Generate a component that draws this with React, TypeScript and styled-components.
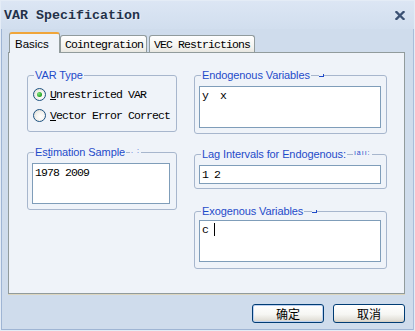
import React from 'react';
import styled, { createGlobalStyle } from 'styled-components';

const Global = createGlobalStyle`
  html, body { margin: 0; padding: 0; }
  body { width: 415px; height: 331px; overflow: hidden; background: #cfdcec; }
`;

const MONO = `"Liberation Mono", "DejaVu Sans Mono", monospace`;
const SANS = `"Liberation Sans", Arial, sans-serif`;

const Window = styled.div`
  box-sizing: border-box;
  width: 415px;
  height: 331px;
  background: #cfdcec;
  border: 1px solid #e4ecf6;
  box-shadow: inset 1px 0 0 #9fb5d4, inset -1px 0 0 #a9bdda, inset 0 -1px 0 #9fb5d4;
  display: flex;
  flex-direction: column;
  font-family: ${SANS};
`;

const TitleBar = styled.div`
  height: 28px;
  flex: none;
  display: flex;
  align-items: center;
  justify-content: space-between;
  padding: 0 9px 0 3px;
  background: linear-gradient(#dce6f4, #d1deee);
`;

const Title = styled.span`
  font-family: ${MONO};
  font-weight: bold;
  font-size: 13.33px;
  color: #24324a;
  text-shadow: 1px 1px 0 rgba(255, 255, 255, 0.45);
`;

const Body = styled.div`
  flex: 1;
  display: flex;
  flex-direction: column;
  padding: 4px 9px 0 7px;
`;

const TabStrip = styled.div`
  display: flex;
  align-items: flex-end;
  height: 19px;
  padding-left: 1px;
  position: relative;
  z-index: 1;
`;

const Tab = styled.div<{ $active?: boolean; $w: number; $gap?: number }>`
  box-sizing: border-box;
  width: ${p => p.$w}px;
  margin-left: ${p => p.$gap ?? 0}px;
  height: ${p => (p.$active ? 21 : 17)}px;
  margin-bottom: ${p => (p.$active ? -1 : 0)}px;
  border: 1px solid #919b9c;
  border-bottom: none;
  border-top: ${p => (p.$active ? '2px solid #f0a53a' : '1px solid #919b9c')};
  border-radius: 3px 3px 0 0;
  background: ${p => (p.$active ? '#eff3f9' : 'linear-gradient(#ffffff, #f3f3ef 70%, #e8e7e1)')};
  padding-left: ${p => (p.$active ? 5 : 4)}px;
  display: flex;
  align-items: center;
  font-family: ${p => (p.$active ? SANS : MONO)};
  font-size: 11.5px;
  letter-spacing: ${p => (p.$active ? '0' : '-0.9px')};
  color: #000;
  white-space: nowrap;
  padding-top: ${p => (p.$active ? 1 : 0)}px;
`;

const Panel = styled.div`
  box-sizing: border-box;
  width: 397px;
  height: 242px;
  background: #eff3f9;
  border: 1px solid #919b9c;
  box-shadow: 0 1px 0 #dcd6c0;
  padding: 15px 17px 0 18px;
  display: grid;
  grid-template-columns: 150px 193px;
  column-gap: 17px;
  align-items: start;
`;

const Column = styled.div`
  display: flex;
  flex-direction: column;
  gap: 13px;
`;

const Group = styled.fieldset<{ $pt?: number; $pb?: number; $pr?: number; $mt?: number }>`
  margin: ${p => p.$mt ?? 0}px 0 0 0;
  min-width: 0;
  border: 1px solid #a7b6cd;
  border-radius: 3px;
  padding: ${p => p.$pt ?? 4}px ${p => p.$pr ?? 5}px ${p => p.$pb ?? 5}px 4px;
`;

const Legend = styled.legend`
  position: relative;
  margin-left: 2px;
  padding: 0 1px;
  font-family: ${SANS};
  font-size: 11px;
  line-height: 14px;
  letter-spacing: -0.1px;
  color: #1f4bc9;
  white-space: nowrap;
`;

const Mark = styled.span<{ $left: number }>`
  position: absolute;
  left: calc(100% + ${p => p.$left}px);
  top: 2px;
  font-family: ${SANS};
  font-size: 7px;
  line-height: 8px;
  letter-spacing: 1px;
  color: #1f4bc9;
  background: #eff3f9;
  padding: 0 1px;
`;

const Corner = styled.span<{ $left: number }>`
  position: absolute;
  left: calc(100% + ${p => p.$left}px);
  top: 6px;
  width: 4px;
  height: 2px;
  border-bottom: 1px solid #1f4bc9;
  border-right: 1px solid #1f4bc9;
  background: #eff3f9;
`;

const RadioRow = styled.label`
  display: flex;
  align-items: center;
  height: 21px;
  font-family: ${MONO};
  font-size: 11.5px;
  letter-spacing: -0.9px;
  color: #000;
  white-space: nowrap;
`;

const RadioCircle = styled.span<{ $checked?: boolean }>`
  box-sizing: border-box;
  flex: none;
  width: 13px;
  height: 13px;
  margin-left: 1px;
  margin-right: 4px;
  border-radius: 50%;
  border: 1px solid #1c5180;
  background: radial-gradient(circle at 60% 60%, #ffffff 0%, #f4f3ef 45%, #d8d5cc 100%);
  display: flex;
  align-items: center;
  justify-content: center;
  &::after {
    content: '';
    display: ${p => (p.$checked ? 'block' : 'none')};
    width: 5px;
    height: 5px;
    border-radius: 50%;
    background: radial-gradient(circle at 35% 35%, #7fe37f, #21a121 70%);
  }
`;

const U = styled.span`
  text-decoration: underline;
`;

const TextBox = styled.div<{ $h: number }>`
  box-sizing: border-box;
  height: ${p => p.$h}px;
  background: #fff;
  border: 1px solid #7f9db9;
  padding: 2px 2px;
  font-family: ${MONO};
  font-size: 11.5px;
  letter-spacing: -0.9px;
  line-height: 13px;
  color: #000;
  white-space: pre;
`;

const Caret = styled.span`
  display: inline-block;
  width: 1px;
  height: 13px;
  background: #000;
  vertical-align: top;
`;

const ButtonRow = styled.div`
  display: flex;
  justify-content: flex-end;
  gap: 9px;
  margin-top: 10px;
`;

const Button = styled.button<{ $default?: boolean }>`
  box-sizing: border-box;
  width: 72px;
  height: 19px;
  padding: 0;
  border: 1px solid #003c74;
  border-radius: 3px;
  background: linear-gradient(#ffffff, #f6f6f3 55%, #e4e2db 85%, #d6d0c5);
  box-shadow: ${p => (p.$default ? 'inset 0 0 0 1px #bcd0f0' : 'inset 0 -1px 0 #d6d0c5')};
  font-family: "Noto Sans CJK SC", sans-serif;
  font-size: 12px;
  line-height: 17px;
  color: #000;
`;

const CloseIcon = () => (
  <svg width="10" height="9" viewBox="0 0 10 9">
    <path d="M1.5 1 L8.5 8 M8.5 1 L1.5 8" stroke="#3b5173" strokeWidth="2.3" strokeLinecap="square" />
  </svg>
);

export default function App() {
  return (
    <>
      <Global />
      <Window>
        <TitleBar>
          <Title>VAR Specification</Title>
          <CloseIcon />
        </TitleBar>
        <Body>
          <TabStrip>
            <Tab $active $w={51}>Basics</Tab>
            <Tab $w={87}>Cointegration</Tab>
            <Tab $w={106} $gap={2}>VEC Restrictions</Tab>
          </TabStrip>
          <Panel>
            <Column>
              <Group $pt={2}>
                <Legend>VAR Type</Legend>
                <RadioRow>
                  <RadioCircle $checked />
                  <span><U>U</U>nrestricted VAR</span>
                </RadioRow>
                <RadioRow>
                  <RadioCircle />
                  <span><U>V</U>ector Error Correct</span>
                </RadioRow>
              </Group>
              <Group $pr={6}>
                <Legend>
                  Es<U>t</U>imation Sample
                  <Mark $left={4}>. :</Mark>
                </Legend>
                <TextBox $h={41}>1978 2009</TextBox>
              </Group>
            </Column>
            <Column>
              <Group>
                <Legend>
                  Endogenous Variables
                  <Corner $left={8} />
                </Legend>
                <TextBox $h={42}>{'y  x'}</TextBox>
              </Group>
              <Group $pb={4}>
                <Legend>
                  Lag Intervals for Endogenous:
                  <Mark $left={6}>ıaıı:</Mark>
                </Legend>
                <TextBox $h={19}>1 2</TextBox>
              </Group>
              <Group $pt={2} $pb={6} $mt={2}>
                <Legend>
                  Exogenous Variables
                  <Corner $left={8} />
                </Legend>
                <TextBox $h={42}>
                  {'c '}
                  <Caret />
                </TextBox>
              </Group>
            </Column>
          </Panel>
          <ButtonRow>
            <Button $default>确定</Button>
            <Button>取消</Button>
          </ButtonRow>
        </Body>
      </Window>
    </>
  );
}
